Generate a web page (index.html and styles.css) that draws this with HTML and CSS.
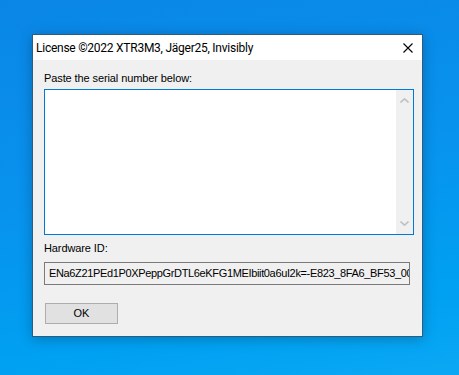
FILE: index.html
```html
<!DOCTYPE html>
<html lang="en">

<head>
  <meta charset="UTF-8">
  <meta name="viewport" content="width=device-width, initial-scale=1.0">
  <title>License</title>
  <link rel="stylesheet" href="styles.css">
</head>

<body>
  <div class="window">
    <!-- title bar -->
    <div class="titlebar">
      <span class="title">License ©2022 XTR3M3, Jäger25, Invisibly</span>
      <svg class="close" width="10" height="10" viewBox="0 0 10 10">
        <path d="M0.5 0.5 L9.5 9.5 M9.5 0.5 L0.5 9.5" stroke="#000" stroke-width="1.1" fill="none" />
      </svg>
    </div>

    <div class="content">
      <div class="label">Paste the serial number below:</div>
      <div class="serial-box">
        <div class="serial-text"></div>
        <div class="scrollbar">
          <svg width="9" height="5" viewBox="0 0 9 5">
            <path d="M0.5 4.5 L4.5 0.8 L8.5 4.5" stroke="#c2c2c2" stroke-width="1.6" fill="none" />
          </svg>
          <svg width="9" height="5" viewBox="0 0 9 5">
            <path d="M0.5 0.5 L4.5 4.2 L8.5 0.5" stroke="#c2c2c2" stroke-width="1.6" fill="none" />
          </svg>
        </div>
      </div>

      <div class="label hw-label">Hardware ID:</div>
      <div class="hw-box">ENa6Z21PEd1P0XPeppGrDTL6eKFG1MEIbiit0a6uI2k=-E823_8FA6_BF53_0000</div>

      <div class="btn">OK</div>
    </div>
  </div>
</body>

</html>
```

FILE: styles.css
```css
body {
  margin: 0;
  width: 459px;
  height: 375px;
  overflow: hidden;
  background: linear-gradient(170deg, #0a86e6 0%, #0892ee 45%, #00a0f2 80%, #0aa8f4 100%);
  font-family: "Liberation Sans", Arial, sans-serif;
  padding: 34px 0 0 32px;
  box-sizing: border-box;
}

.window {
  width: 391px;
  height: 303px;
  box-sizing: border-box;
  border: 1px solid #2d5c7c;
  background: #f0f0f0;
  box-shadow: 0 2px 12px rgba(0, 0, 0, 0.25);
  display: flex;
  flex-direction: column;
}

.titlebar {
  height: 25px;
  background: #fff;
  display: flex;
  align-items: center;
  justify-content: space-between;
  padding: 0 9px 0 3px;
}

.title {
  font-family: Roboto, "Noto Sans", sans-serif;
  font-size: 12px;
  letter-spacing: -0.25px;
  color: #000;
  padding-top: 1px;
}

.close {
  display: block;
}

.content {
  padding: 10px 0 0 11px;
}

.label {
  font-size: 11px;
  line-height: 16px;
  letter-spacing: -0.1px;
  color: #000;
}

.serial-box {
  margin-top: 3px;
  width: 370px;
  height: 146px;
  box-sizing: border-box;
  border: 1px solid #0078d7;
  background: #fff;
  display: flex;
  justify-content: flex-end;
}

.scrollbar {
  width: 17px;
  background: #f0f0f0;
  display: flex;
  flex-direction: column;
  justify-content: space-between;
  align-items: center;
  padding: 8px 0 8px;
}

.scrollbar svg {
  display: block;
}

.hw-label {
  margin-top: 5px;
}

.hw-box {
  margin-top: 6px;
  width: 366px;
  height: 23px;
  box-sizing: border-box;
  border: 1px solid #7a7a7a;
  background: #f0f0f0;
  font-size: 11px;
  line-height: 21px;
  letter-spacing: -0.35px;
  padding-left: 4px;
  white-space: nowrap;
  overflow: hidden;
  color: #000;
}

.btn {
  margin: 18px 0 0 1px;
  width: 73px;
  height: 21px;
  box-sizing: border-box;
  border: 1px solid #adadad;
  background: #e1e1e1;
  font-size: 11px;
  line-height: 19px;
  text-align: center;
  color: #000;
}
```
